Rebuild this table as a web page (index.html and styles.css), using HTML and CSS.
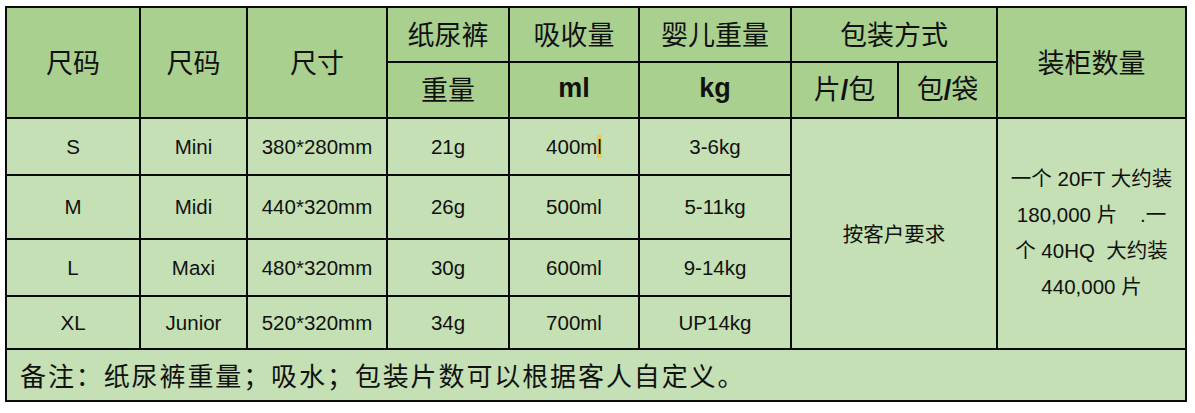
FILE: index.html
```html
<!DOCTYPE html>
<html lang="zh-CN">
<head>
<meta charset="utf-8">
<title>尺码表</title>
<link rel="stylesheet" href="styles.css">
</head>
<body>
<table class="spec">
  <colgroup>
    <col class="c1"><col class="c2"><col class="c3"><col class="c4"><col class="c5"><col class="c6"><col class="c7"><col class="c8"><col class="c9">
  </colgroup>
  <thead>
    <tr class="h1">
      <th rowspan="2">尺码</th>
      <th rowspan="2">尺码</th>
      <th rowspan="2">尺寸</th>
      <th>纸尿裤</th>
      <th>吸收量</th>
      <th>婴儿重量</th>
      <th colspan="2">包装方式</th>
      <th rowspan="2">装柜数量</th>
    </tr>
    <tr class="h2">
      <th>重量</th>
      <th class="latin">ml</th>
      <th class="latin">kg</th>
      <th>片<span class="latin">/</span>包</th>
      <th>包<span class="latin">/</span>袋</th>
    </tr>
  </thead>
  <tbody>
    <tr class="r1">
      <td>S</td><td>Mini</td><td>380*280mm</td><td>21g</td><td>400m<span class="mark">l</span></td><td>3-6kg</td>
      <td colspan="2" rowspan="4" class="pack">按客户要求</td>
      <td rowspan="4" class="box">一个 20FT 大约装<br>180,000 片&nbsp;&nbsp;&nbsp;&nbsp;.一<br>个 40HQ&nbsp; 大约装<br>440,000 片</td>
    </tr>
    <tr class="r2">
      <td>M</td><td>Midi</td><td>440*320mm</td><td>26g</td><td>500ml</td><td>5-11kg</td>
    </tr>
    <tr class="r3">
      <td>L</td><td>Maxi</td><td>480*320mm</td><td>30g</td><td>600ml</td><td>9-14kg</td>
    </tr>
    <tr class="r4">
      <td>XL</td><td>Junior</td><td>520*320mm</td><td>34g</td><td>700ml</td><td>UP14kg</td>
    </tr>
    <tr class="note">
      <td colspan="9">备注：纸尿裤重量；吸水；包装片数可以根据客人自定义。</td>
    </tr>
  </tbody>
</table>
</body>
</html>
```

FILE: styles.css
```css
html, body {
  margin: 0;
  padding: 0;
  background: #ffffff;
}

body {
  padding: 6px 0 0 5px;
  font-family: "Liberation Sans", "Noto Sans CJK SC", sans-serif;
  color: #111111;
}

.spec {
  border-collapse: collapse;
  table-layout: fixed;
  width: 1182px;
}

.c1 { width: 134px; }
.c2 { width: 107px; }
.c3 { width: 140px; }
.c4 { width: 122px; }
.c5 { width: 130px; }
.c6 { width: 152px; }
.c7 { width: 107px; }
.c8 { width: 99px; }
.c9 { width: 189px; }

.spec th,
.spec td {
  border: 2px solid #0a0a0a;
  padding: 0;
  text-align: center;
  vertical-align: middle;
}

.spec th {
  background: #a9d08e;
  font-family: "Noto Sans CJK SC", sans-serif;
  font-weight: 400;
  font-size: 27px;
  line-height: 1.1;
  color: #111111;
  padding-bottom: 2px;
}

.spec th .latin,
.spec th.latin {
  font-family: "Liberation Sans", sans-serif;
  font-weight: 700;
}

.h1 { height: 55px; }
.h2 { height: 56px; }

.spec td {
  background: #c5e0b4;
  font-size: 20.5px;
  line-height: 1.15;
}

.r1 { height: 57px; }
.r2 { height: 64px; }
.r3 { height: 57px; }
.r4 { height: 53px; }

.mark {
  background: #f7c948;
}

.spec td.pack {
  font-family: "Noto Sans CJK SC", sans-serif;
}

.spec td.box {
  line-height: 36px;
  padding-bottom: 2px;
}

.note { height: 52px; }

.spec .note td {
  text-align: left;
  padding-left: 13px;
  font-family: "Noto Sans CJK SC", sans-serif;
  font-size: 26px;
  letter-spacing: 1.9px;
}
```
